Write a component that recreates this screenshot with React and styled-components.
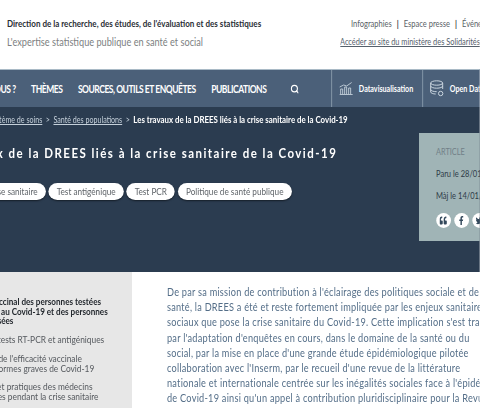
import React from "react";
import styled, { createGlobalStyle } from "styled-components";
import { FiSearch } from "react-icons/fi";
import { FaFacebookF, FaTwitter, FaQuoteLeft } from "react-icons/fa";

// the reference is squeezed horizontally, so the whole canvas is too
const SQUEEZE = 0.82;
const x = (v) => `${v / SQUEEZE}px`;

const GlobalStyle = createGlobalStyle`
  html, body { margin: 0; padding: 0; background: #fff; overflow: hidden; }
  body { font-family: "Lato", "Liberation Sans", sans-serif; }
`;

const Viewport = styled.div`
  width: 480px;
  height: 408px;
  overflow: hidden;
  filter: blur(0.35px);
`;

const Page = styled.div`
  width: ${x(480)};
  height: 408px;
  transform: scaleX(${SQUEEZE});
  transform-origin: left top;
`;

const Header = styled.header`
  height: 69px;
  display: flex;
  justify-content: space-between;
  background: #fff;
  box-sizing: border-box;
  padding: 17px 0 0 ${x(7)};
`;

const Brand = styled.div`
  display: flex;
  flex-direction: column;
  gap: 5px;
`;

const BrandName = styled.div`
  font-size: 9.8px;
  line-height: 13px;
  color: #2a2f36;
  font-weight: 700;
  white-space: nowrap;
`;

const Tagline = styled.div`
  font-size: 11.2px;
  line-height: 13px;
  color: #7d7f82;
  white-space: nowrap;
`;

const Tools = styled.div`
  width: ${x(140)};
  flex: none;
  display: flex;
  flex-direction: column;
  gap: 5px;
  overflow: hidden;
`;

const ToolLinks = styled.div`
  display: flex;
  gap: ${x(5)};
  padding-left: ${x(11)};
  font-size: 9.2px;
  line-height: 13px;
  color: #5a5f66;
  white-space: nowrap;
`;

const Bar = styled.span`
  color: #2a2f36;
  font-weight: 700;
`;

const MinistryLink = styled.a`
  font-size: 9px;
  line-height: 13px;
  color: #55606c;
  text-decoration: underline;
  white-space: nowrap;
`;

const Nav = styled.nav`
  height: 37px;
  display: flex;
  align-items: stretch;
  background: #4b6079;
  border-top: 1px solid #a9bac6;
  overflow: hidden;
`;

const NavList = styled.div`
  display: flex;
  align-items: center;
  width: ${x(331)};
  flex: none;
  overflow: hidden;
`;

const NavItems = styled.div`
  display: flex;
  align-items: center;
  gap: ${x(15.5)};
  margin-left: ${x(-65)};
`;

const NavItem = styled.span`
  font-size: 10.4px;
  font-weight: 700;
  color: #fff;
  white-space: nowrap;
  letter-spacing: -0.58px;
`;

const SearchIcon = styled(FiSearch)`
  color: #fff;
  width: ${x(9)};
  height: 10px;
  stroke-width: 3;
  flex: none;
  margin-left: ${x(8)};
`;

const NavTool = styled.div`
  flex: none;
  width: ${(p) => x(p.$width)};
  display: flex;
  align-items: center;
  gap: ${x(5)};
  padding-left: ${x(7)};
  box-sizing: border-box;
  border-left: 1px solid #8fa1b1;
  font-size: 8.7px;
  font-weight: 700;
  color: #fff;
  white-space: nowrap;
`;

const Hero = styled.section`
  height: 165px;
  background: #2b3c50;
  position: relative;
  overflow: hidden;
`;

const Breadcrumb = styled.div`
  height: 25px;
  display: flex;
  align-items: center;
  gap: ${x(3.5)};
  margin-left: ${x(-45)};
  font-size: 8.7px;
  color: #c5d0da;
  white-space: nowrap;
`;

const Crumb = styled.span`
  text-decoration: underline;
`;

const CrumbCurrent = styled.span`
  color: #fff;
  font-size: 9.6px;
  font-weight: 700;
`;

const Title = styled.h1`
  margin: 12px 0 0 ${x(-70)};
  font-size: 14px;
  line-height: 17px;
  font-weight: 700;
  color: #fff;
  letter-spacing: 1.8px;
  white-space: nowrap;
`;

const Tags = styled.div`
  display: flex;
  gap: ${x(3)};
  margin: 22px 0 0 ${x(-21)};
`;

const Tag = styled.span`
  height: 17px;
  padding: 0 ${x(8)};
  border-radius: ${x(9)} / 8.5px;
  background: #fff;
  color: #5f6469;
  font-size: 10px;
  line-height: 17px;
  white-space: nowrap;
  box-shadow: 0 1px 2px rgba(0, 0, 0, 0.5);
`;

const InfoCard = styled.aside`
  position: absolute;
  left: ${x(419)};
  top: 26px;
  width: ${x(100)};
  height: 108px;
  box-sizing: border-box;
  padding: 13px 0 0 ${x(17)};
  background: #a0b4b6;
  font-size: 9.2px;
  color: #2f3c48;
`;

const CardType = styled.div`
  font-size: 9px;
  line-height: 12px;
  color: #718087;
`;

const CardDate = styled.div`
  margin-top: 10px;
  line-height: 12px;
  white-space: nowrap;
`;

const ShareRow = styled.div`
  display: flex;
  gap: ${x(3)};
  margin-top: 11px;
`;

const ShareButton = styled.span`
  width: ${x(15)};
  height: 15px;
  border-radius: 50%;
  background: #fff;
  color: #34495c;
  display: flex;
  align-items: center;
  justify-content: center;
  font-size: 9px;
`;

const Main = styled.main`
  display: flex;
  height: 137px;
`;

const Sidebar = styled.div`
  width: ${x(132)};
  flex: none;
  background: #e7e7e7;
  overflow: hidden;
  box-sizing: border-box;
  padding-top: 25px;
`;

const SideLink = styled.div`
  margin: 0 0 9px ${(p) => x(p.$offset)};
  font-size: ${(p) => (p.$active ? 9.9 : 10.2)}px;
  line-height: 9.7px;
  color: ${(p) => (p.$active ? "#23282e" : "#55595e")};
  font-weight: ${(p) => (p.$active ? 700 : 400)};
  white-space: nowrap;
`;

const Article = styled.article`
  padding: 12px 0 0 ${x(35)};
  overflow: hidden;
  flex: 1;
`;

const Line = styled.div`
  font-size: 11.2px;
  line-height: 15.2px;
  color: #546e88;
  white-space: nowrap;
  letter-spacing: 0.3px;
`;

const bodyLines = [
  "De par sa mission de contribution à l'éclairage des politiques sociale et de",
  "santé, la DREES a été et reste fortement impliquée par les enjeux sanitaires",
  "sociaux que pose la crise sanitaire du Covid-19. Cette implication s'est traduite",
  "par l'adaptation d'enquêtes en cours, dans le domaine de la santé ou du",
  "social, par la mise en place d'une grande étude épidémiologique pilotée",
  "collaboration avec l'Inserm, par le recueil d'une revue de la littérature",
  "nationale et internationale centrée sur les inégalités sociales face à l'épidémie",
  "de Covid-19 ainsi qu'un appel à contribution pluridisciplinaire pour la Revue",
  "française des affaires sociales et par la réalisation de nombreuses études",
];

const ChartIcon = () => (
  <svg width={15 / SQUEEZE} height="13" viewBox="0 0 15 13" preserveAspectRatio="none" fill="none" stroke="#b9c6d2" strokeWidth="1">
    <path d="M1 12.5h13M2 12V7h2v5M6 12V5h2v7M10 12V6h2v6" />
    <path d="M1 5l4-2 3 1 5-3.5" />
  </svg>
);

const DatabaseIcon = () => (
  <svg width={15 / SQUEEZE} height="17" viewBox="0 0 15 17" preserveAspectRatio="none" fill="none" stroke="#c9d4de" strokeWidth="1">
    <ellipse cx="7" cy="3" rx="6" ry="2.2" />
    <path d="M1 3v9c0 1 2.5 2 5 2M13 3v6M1 6c0 1.2 2.6 2.2 6 2.2s6-1 6-2.2M1 9.5c0 1.2 2.6 2.2 6 2.2" />
    <circle cx="11" cy="13.5" r="2.2" />
  </svg>
);

export default function App() {
  return (
    <Viewport>
      <GlobalStyle />
      <Page>
        <Header>
          <Brand>
            <BrandName>Direction de la recherche, des études, de l'évaluation et des statistiques</BrandName>
            <Tagline>L'expertise statistique publique en santé et social</Tagline>
          </Brand>
          <Tools>
            <ToolLinks>
              <span>Infographies</span>
              <Bar>|</Bar>
              <span>Espace presse</span>
              <Bar>|</Bar>
              <span>Événements</span>
            </ToolLinks>
            <MinistryLink>Accéder au site du ministère des Solidarités et de la Santé</MinistryLink>
          </Tools>
        </Header>

        <Nav>
          <NavList>
            <NavItems>
              <NavItem>QUI SOMMES-NOUS ?</NavItem>
              <NavItem>THÈMES</NavItem>
              <NavItem>SOURCES, OUTILS ET ENQUÊTES</NavItem>
              <NavItem>PUBLICATIONS</NavItem>
              <SearchIcon preserveAspectRatio="none" />
            </NavItems>
          </NavList>
          <NavTool $width={91}>
            <ChartIcon />
            Datavisualisation
          </NavTool>
          <NavTool $width={100}>
            <DatabaseIcon />
            Open Data
          </NavTool>
        </Nav>

        <Hero>
          <Breadcrumb>
            <Crumb>Accueil</Crumb>
            <span>&gt;</span>
            <Crumb>Système de soins</Crumb>
            <span>&gt;</span>
            <Crumb>Santé des populations</Crumb>
            <span>&gt;</span>
            <CrumbCurrent>Les travaux de la DREES liés à la crise sanitaire de la Covid-19</CrumbCurrent>
          </Breadcrumb>
          <Title>Les travaux de la DREES liés à la crise sanitaire de la Covid-19</Title>
          <Tags>
            <Tag>Crise sanitaire</Tag>
            <Tag>Test antigénique</Tag>
            <Tag>Test PCR</Tag>
            <Tag>Politique de santé publique</Tag>
          </Tags>
          <InfoCard>
            <CardType>ARTICLE</CardType>
            <CardDate>Paru le 28/01/2021</CardDate>
            <CardDate>Màj le 14/01/2022</CardDate>
            <ShareRow>
              <ShareButton><FaQuoteLeft /></ShareButton>
              <ShareButton><FaFacebookF /></ShareButton>
              <ShareButton><FaTwitter /></ShareButton>
            </ShareRow>
          </InfoCard>
        </Hero>

        <Main>
          <Sidebar>
            <SideLink $active $offset={-33}>
              Statut vaccinal des personnes testées
              <br />
              positives au Covid-19 et des personnes
              <br />
              hospitalisées
            </SideLink>
            <SideLink $offset={-49}>Nombre des tests RT-PCR et antigéniques</SideLink>
            <SideLink $offset={-42}>
              Évaluation de l'efficacité vaccinale
              <br />
              contre les formes graves de Covid-19
            </SideLink>
            <SideLink $offset={-38}>
              Opinions et pratiques des médecins
              <br />
              expériences pendant la crise sanitaire
            </SideLink>
          </Sidebar>
          <Article>
            {bodyLines.map((line) => (
              <Line key={line}>{line}</Line>
            ))}
          </Article>
        </Main>
      </Page>
    </Viewport>
  );
}
